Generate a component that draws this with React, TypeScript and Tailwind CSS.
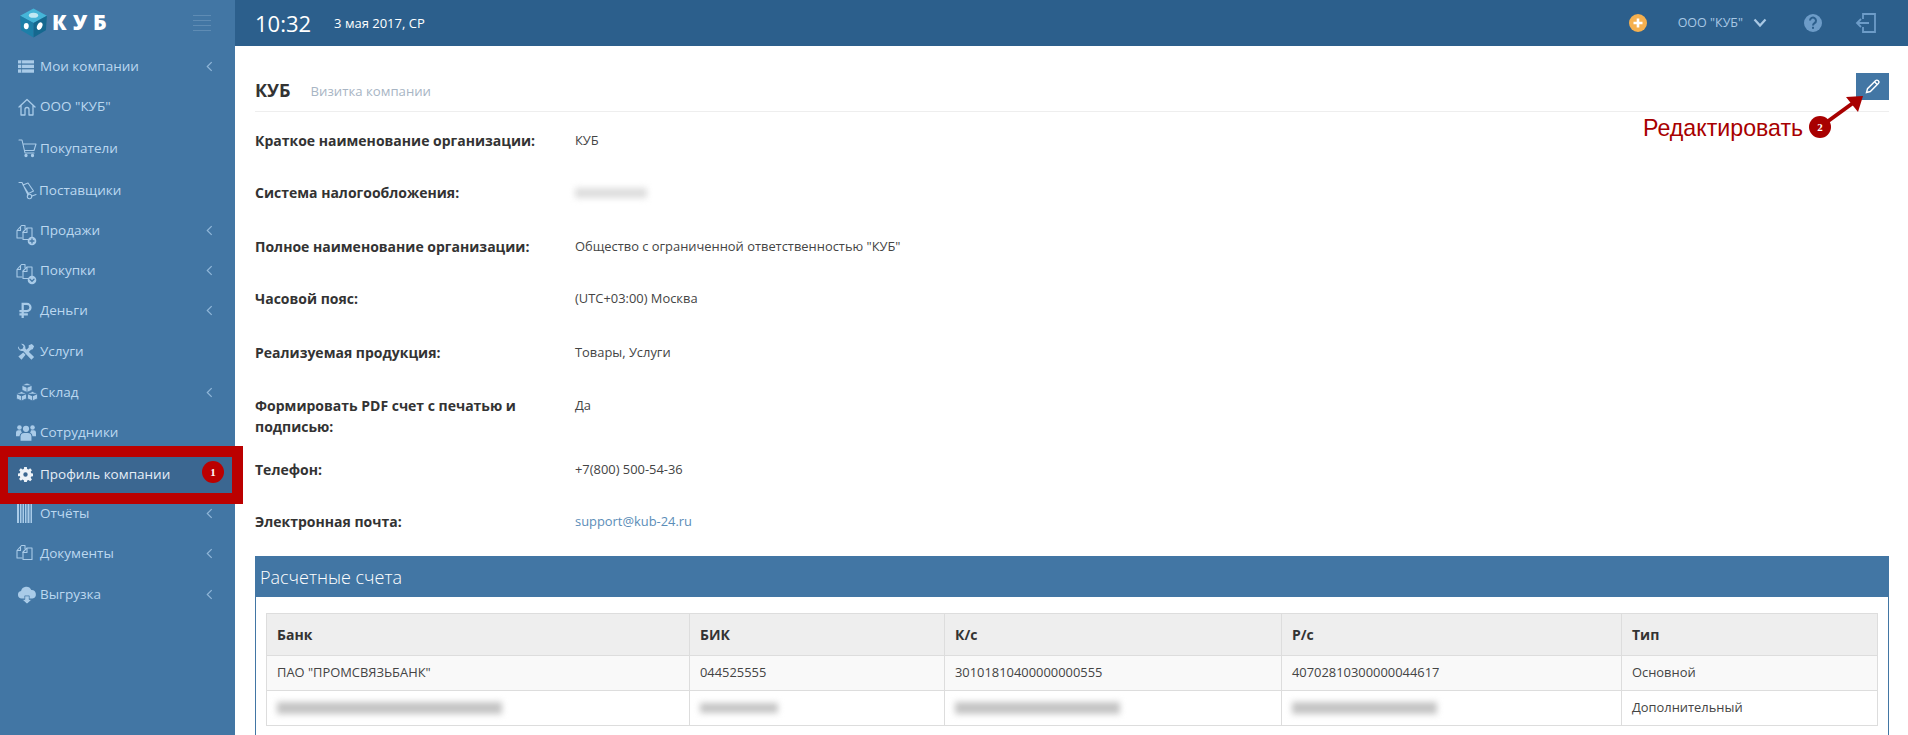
import React from "react";

const S = ({ children, w = 20, h = 20, vb = "0 0 20 20", className = "" }: { children: React.ReactNode; w?: number; h?: number; vb?: string; className?: string }) => (
  <svg width={w} height={h} viewBox={vb} fill="none" stroke="currentColor" strokeWidth={1.1} strokeLinecap="round" strokeLinejoin="round" className={className}>
    {children}
  </svg>
);

const Docs = ({ badge }: { badge?: "plus" | "down" }) => (
  <S w={22} h={24} vb="0 0 22 24" className={badge ? "translate-y-[3px]" : ""}>
    <path d="M2 8.500 6.500 3.500H10v3M2 8.500v7.500h5M2 8.500h3.500V4.500" />
    <path d="M8 10 12 6h5v11.500H8z" />
    <path d="M8 10.500h4V6.500" />
    {badge && <circle cx="17" cy="19" r="4.300" fill="currentColor" stroke="none" />}
    {badge === "plus" && <path d="M15 19h4M17 17v4" stroke="#4276a4" strokeWidth={1.3} />}
    {badge === "down" && <path d="M15 18.300l2 2 2-2" stroke="#4276a4" strokeWidth={1.3} />}
  </S>
);

const Gear = () => (
  <svg width="15" height="15" viewBox="0 0 17 17" fill="currentColor">
    <path fillRule="evenodd" d="M7 0h3l.4 2.300 1.500.6L13.800 1.500 15.800 3.600 14.400 5.500l.6 1.500 2 .4v3l-2 .4-.6 1.400 1.400 1.900-2 2.100-1.900-1.400-1.500.6L10 17H7l-.4-2.100-1.500-.6-1.900 1.400-2-2.100 1.400-1.900-.6-1.400L0 10.400v-3l2-.4.6-1.500L1.200 3.600l2-2.100 1.900 1.400 1.500-.6zM8.500 6a2.500 2.500 0 1 0 0 5 2.500 2.500 0 0 0 0-5z" />
  </svg>
);

const icons: Record<string, React.ReactNode> = {
  list: (
    <svg width="16" height="13" viewBox="0 0 18 14" fill="currentColor">
      <rect x="0" y="0" width="18" height="3.600" />
      <rect x="0" y="5" width="18" height="3.800" />
      <rect x="0" y="10.200" width="18" height="3.800" />
      <path d="M4 0v14" stroke="#4276a4" strokeWidth="0.8" />
    </svg>
  ),
  home: (
    <S>
      <path d="M2 10 10 2.500 18 10M4 8.500V18h4v-5.500a2 2 0 0 1 4 0V18h4V8.500" strokeWidth={1.3} />
    </S>
  ),
  cart: (
    <S>
      <path d="M1 2h3l3 13h9M5 6h13l-2 6.500H7" />
      <circle cx="8" cy="17.500" r="1.100" fill="currentColor" />
      <circle cx="14.500" cy="17.500" r="1.100" fill="currentColor" />
    </S>
  ),
  dolly: (
    <S>
      <path d="M1 2.500h3L10 15M5 5l5-2 5.500 8-5 2.500z" />
      <circle cx="11.500" cy="16.500" r="2.200" />
      <path d="M14 16l4-1.500" />
    </S>
  ),
  sales: <Docs badge="plus" />,
  buys: <Docs badge="down" />,
  docs: <Docs />,
  rub: (
    <svg width="15" height="17" viewBox="0 0 16 18" fill="none" stroke="currentColor" strokeWidth="2.400">
      <path d="M5 17V2h4.500a3.700 3.700 0 0 1 0 7.600H1.500M1.500 13h9" />
    </svg>
  ),
  tools: (
    <svg width="18" height="18" viewBox="0 0 20 20" fill="currentColor">
      <path d="M1 4.500a4.500 4.500 0 0 0 5.800 4.300l9.200 9.700 3-3L9.300 6.200A4.500 4.500 0 0 0 4.500.8l2.800 2.700-1 2.900-3 .9L1.500 3.800z" />
      <path d="M13 2.500l3.500-1.500 2.500 2.500-1.500 3.500-2 .5-3 3-2.500-2.500 3-3zM7 10.500l2.500 2.500-4.500 5.500L1.500 15z" />
    </svg>
  ),
  boxes: (
    <svg width="24" height="20" viewBox="0 0 24 20" fill="currentColor" stroke="#4276a4" strokeWidth="0.8">
      <path d="M12 1l5 2.200v5L12 10.400 7 8.200V3.200zM7 3.200l5 2.200 5-2.200M12 5.400v5" />
      <path d="M6.500 9.500l5 2.200v5l-5 2.200-5-2.200v-5zM1.500 11.700l5 2.200 5-2.200M6.500 13.900v5" />
      <path d="M17.500 9.500l5 2.200v5l-5 2.200-5-2.200v-5zM12.500 11.700l5 2.200 5-2.200M17.500 13.900v5" />
    </svg>
  ),
  users: (
    <svg width="20" height="17" viewBox="0 0 22 18" fill="currentColor">
      <circle cx="11" cy="5" r="3.400" />
      <circle cx="3.800" cy="3.500" r="2.500" />
      <circle cx="18.200" cy="3.500" r="2.500" />
      <path d="M5 18v-5a4 4 0 0 1 4-3.500h4a4 4 0 0 1 4 3.500v5z" />
      <path d="M0 12V9a2.500 2.500 0 0 1 2.500-2.500h3A5 5 0 0 0 6.500 9 5 5 0 0 0 3.800 13H0zM22 12V9a2.500 2.500 0 0 0-2.500-2.500h-3A5 5 0 0 1 15.500 9a5 5 0 0 1 2.700 4H22z" />
    </svg>
  ),
  gear: <Gear />,
  reports: (
    <svg width="15" height="20" viewBox="0 0 15 20" fill="currentColor">
      <path d="M0 0h2v20H0zM3 0h1.500v20H3zM5.500 0h1.500v20H5.500zM8 0h1.500v20H8zM10.500 0h2v20h-2zM13.500 0H15v20h-1.500z" />
    </svg>
  ),
  cloud: (
    <svg width="20" height="18" viewBox="0 0 22 20" fill="currentColor">
      <path d="M5 14a4.300 4.300 0 0 1-.6-8.500A6 6 0 0 1 15.800 4.500 4.800 4.800 0 0 1 17 14z" />
      <path d="M8.500 11h5v4h3L11 20l-5.500-5h3z" stroke="#4276a4" strokeWidth="0.8" />
    </svg>
  ),
};

type Item = { t: string; i: string; arrow?: boolean; h: string; tx: string; iw: string };
const items: Item[] = [
  { t: "Мои компании", i: "list", arrow: true, h: "h-[40px]", tx: "", iw: "w-[40px] pl-[18px]" },
  { t: 'ООО "КУБ"', i: "home", h: "h-[41px]", tx: "", iw: "w-[40px] pl-[17px]" },
  { t: "Покупатели", i: "cart", h: "h-[42px]", tx: "", iw: "w-[40px] pl-[18px]" },
  { t: "Поставщики", i: "dolly", h: "h-[42px]", tx: "ml-[-1px]", iw: "w-[40px] pl-[18px]" },
  { t: "Продажи", i: "sales", arrow: true, h: "h-[39px]", tx: "", iw: "w-[40px] pl-[15px]" },
  { t: "Покупки", i: "buys", arrow: true, h: "h-[40px]", tx: "", iw: "w-[40px] pl-[15px]" },
  { t: "Деньги", i: "rub", arrow: true, h: "h-[41px]", tx: "", iw: "w-[40px] pl-[18px]" },
  { t: "Услуги", i: "tools", h: "h-[41px]", tx: "", iw: "w-[40px] pl-[17px]" },
  { t: "Склад", i: "boxes", arrow: true, h: "h-[40px]", tx: "", iw: "w-[40px] pl-[15px]" },
  { t: "Сотрудники", i: "users", h: "h-[41px]", tx: "", iw: "w-[40px] pl-[16px]" },
  { t: "Профиль компании", i: "gear", h: "h-[40px]", tx: "", iw: "w-[40px] pl-[18px]" },
  { t: "Отчёты", i: "reports", arrow: true, h: "h-[40px]", tx: "", iw: "w-[40px] pl-[17px]" },
  { t: "Документы", i: "docs", arrow: true, h: "h-[41px]", tx: "", iw: "w-[40px] pl-[15px]" },
  { t: "Выгрузка", i: "cloud", arrow: true, h: "h-[41px]", tx: "", iw: "w-[40px] pl-[17px]" },
];

const Blur = ({ w, h = "h-[10px]", tone = "bg-[#c4c4c4]" }: { w: string; h?: string; tone?: string }) => (
  <div className={`${w} ${h} ${tone} blur-[3px]`} />
);

const rows: { l: React.ReactNode; v: React.ReactNode; mb: string }[] = [
  { l: "Краткое наименование организации:", v: "КУБ", mb: "mb-[31px]" },
  { l: "Система налогообложения:", v: <div className="mt-[6px]"><Blur w="w-[72px]" tone="bg-[#dddddd]" /></div>, mb: "mb-[33px]" },
  { l: "Полное наименование организации:", v: 'Общество с ограниченной ответственностью "КУБ"', mb: "mb-[31px]" },
  { l: "Часовой пояс:", v: "(UTC+03:00) Москва", mb: "mb-[33px]" },
  { l: "Реализуемая продукция:", v: "Товары, Услуги", mb: "mb-[32px]" },
  { l: "Формировать PDF счет с печатью и подписью:", v: "Да", mb: "mb-[22px]" },
  { l: "Телефон:", v: "+7(800) 500-54-36", mb: "mb-[31px]" },
  { l: "Электронная почта:", v: <span className="text-[#5b8db8]">support@kub-24.ru</span>, mb: "mb-[24px]" },
];

const Cell = ({ children, head }: { children?: React.ReactNode; head?: boolean }) =>
  head ? (
    <th className="border border-[#dddddd] px-[10px] text-left text-[14px] font-bold text-[#333333]">{children}</th>
  ) : (
    <td className="border border-[#dddddd] px-[10px] text-[12.900px] text-[#444444]">{children}</td>
  );

export default function App() {
  return (
    <div className="relative flex h-[735px] w-[1908px] overflow-hidden bg-white font-['Open_Sans',sans-serif]">
      <aside className="h-full w-[235px] shrink-0 bg-[#4276a4]">
        <div className="flex h-[46px] items-center pl-[18px]">
          <svg width="31" height="32" viewBox="0 0 30 30">
            <path d="M15 1 28 8 15 15 2 8z" fill="#45b5d8" />
            <path d="M2 8 15 15v14L3 22z" fill="#1d7fa8" />
            <path d="M28 8 15 15v14l12-7z" fill="#15688f" />
            <ellipse cx="15" cy="7.500" rx="4.500" ry="2.500" fill="#bfe8f3" />
            <ellipse cx="8" cy="18" rx="2.400" ry="3" fill="#ffffff" />
            <ellipse cx="21" cy="18" rx="2.400" ry="3.800" fill="#ffffff" transform="rotate(25 21 18)" />
          </svg>
          <span className="ml-[3px] text-[21px] font-extrabold tracking-[6px] text-white">КУБ</span>
          <div className="ml-auto mr-[24px] flex w-[18px] flex-col gap-[4px]">
            <div className="h-px bg-[#5f8cb4]" />
            <div className="h-px bg-[#5f8cb4]" />
            <div className="h-px bg-[#5f8cb4]" />
            <div className="h-px bg-[#5f8cb4]" />
          </div>
        </div>
        <nav>
          {items.map((it) => (
            <div key={it.t} className={`flex ${it.h} items-center text-[13.500px] text-[#bcd8f0]`}>
              <span className={`flex shrink-0 items-center text-[#a9cbe8] ${it.iw}`}>{icons[it.i]}</span>
              <span className={it.tx}>{it.t}</span>
              {it.arrow && (
                <svg width="7" height="11" viewBox="0 0 8 12" fill="none" stroke="#8fb6d8" strokeWidth="1.400" className="ml-auto mr-[22px]">
                  <path d="M6.500 1 1.500 6l5 5" />
                </svg>
              )}
            </div>
          ))}
        </nav>
      </aside>

      <div className="flex min-w-0 flex-1 flex-col">
        <header className="flex h-[46px] shrink-0 items-center bg-[#2c5f8c] pl-[20px] text-white">
          <span className="text-[22px]">10:32</span>
          <span className="ml-[23px] pt-[1px] text-[13px]">3 мая 2017, СР</span>
          <div className="ml-auto flex items-center">
            <svg width="20" height="20" viewBox="0 0 20 20">
              <circle cx="10" cy="10" r="9" fill="#f5b04f" />
              <path d="M10 5.500v9M5.500 10h9" stroke="#fff" strokeWidth="2.600" />
            </svg>
            <span className="ml-[30px] text-[12.500px] text-[#a9c8e4]">ООО "КУБ"</span>
            <svg width="14" height="10" viewBox="0 0 14 10" fill="none" stroke="#a9c8e4" strokeWidth="2.200" className="ml-[10px]">
              <path d="M1.500 1.500 7 7.500l5.500-6" />
            </svg>
            <svg width="20" height="20" viewBox="0 0 20 20" className="ml-[36px]">
              <circle cx="10" cy="10" r="9" fill="#6d9cc8" />
              <path d="M7 7.500a3 3 0 1 1 4.500 2.700c-1 .6-1.500 1-1.500 2.300" fill="none" stroke="#2c5f8c" strokeWidth="2" />
              <rect x="9" y="13.800" width="2" height="2" fill="#2c5f8c" />
            </svg>
            <svg width="22" height="22" viewBox="0 0 22 22" fill="none" stroke="#6d9cc8" strokeWidth="1.800" className="ml-[32px] mr-[31px]">
              <path d="M8 7V2h12v18H8v-5" />
              <path d="M14 11H2M6 7l-4 4 4 4" />
            </svg>
          </div>
        </header>

        <main className="min-h-0 flex-1 pl-[20px] pr-[19px]">
          <div className="flex h-[66px] items-end border-b border-[#eeeeee] pb-[7px]">
            <span className="text-[18px] font-bold leading-[28px] text-[#333333]">КУБ</span>
            <span className="ml-[20px] text-[13.200px] leading-[26px] text-[#a8b5c4]">Визитка компании</span>
            <button className="mb-[4px] ml-auto flex h-[27px] w-[33px] items-center justify-center self-end bg-[#4276a4] text-white">
              <svg width="15" height="15" viewBox="0 0 15 15" fill="none" stroke="currentColor" strokeWidth="1.400">
                <path d="M1.500 13.500l1-3.800L10.500 1.700a1.500 1.500 0 0 1 2.800 2.800L5.300 12.500z" />
                <path d="M9.500 2.800l2.700 2.700" />
              </svg>
            </button>
          </div>

          <div className="pt-[18px]">
            {rows.map((r, i) => (
              <div key={i} className={`flex ${r.mb}`}>
                <div className="w-[300px] shrink-0 text-[14px] font-bold leading-[21px] text-[#333333]">{r.l}</div>
                <div className="ml-[20px] text-[12.900px] leading-[21px] text-[#444444]">{r.v}</div>
              </div>
            ))}
          </div>

          <section className="h-[300px] border border-[#4276a4]">
            <div className="flex h-[40px] items-center bg-[#4276a4] pl-[4px] text-[18px] font-light text-white">Расчетные счета</div>
            <div className="px-[10px] pt-[16px]">
              <table className="w-full table-fixed border-collapse">
                <colgroup>
                  <col className="w-[423px]" />
                  <col className="w-[255px]" />
                  <col className="w-[337px]" />
                  <col className="w-[340px]" />
                  <col />
                </colgroup>
                <thead>
                  <tr className="h-[42px] bg-[#eeeeee]">
                    <Cell head>Банк</Cell>
                    <Cell head>БИК</Cell>
                    <Cell head>К/с</Cell>
                    <Cell head>Р/с</Cell>
                    <Cell head>Тип</Cell>
                  </tr>
                </thead>
                <tbody>
                  <tr className="h-[35px] bg-[#f9f9f9]">
                    <Cell>ПАО "ПРОМСВЯЗЬБАНК"</Cell>
                    <Cell>044525555</Cell>
                    <Cell>30101810400000000555</Cell>
                    <Cell>40702810300000044617</Cell>
                    <Cell>Основной</Cell>
                  </tr>
                  <tr className="h-[35px]">
                    <Cell><Blur w="w-[225px]" h="h-[12px]" /></Cell>
                    <Cell><Blur w="w-[78px]" h="h-[10px]" /></Cell>
                    <Cell><Blur w="w-[165px]" h="h-[12px]" /></Cell>
                    <Cell><Blur w="w-[145px]" h="h-[12px]" /></Cell>
                    <Cell>Дополнительный</Cell>
                  </tr>
                </tbody>
              </table>
            </div>
          </section>
        </main>
      </div>

      {/* Annotations over the page */}
      <div className="pointer-events-none absolute left-0 top-[446px] flex h-[58px] w-[243px] items-center border-y-[11px] border-l-[8px] border-r-[11px] border-[#bb0000] bg-[#3b6791]">
        <span className="flex w-[32px] shrink-0 pb-[2px] pl-[10px] text-[#eef3f8]"><Gear /></span>
        <span className="pb-[2px] text-[13.500px] text-[#e6eef6]">Профиль компании</span>
      </div>
      <div className="absolute left-[202px] top-[461px] flex h-[22px] w-[22px] items-center justify-center rounded-full bg-[#bb0000] font-['Liberation_Serif',serif] text-[11px] font-bold text-white">1</div>

      <div className="absolute left-[1643px] top-[113px] font-['Liberation_Sans',sans-serif] text-[23.200px] leading-[30px] text-[#a80000]">Редактировать</div>
      <svg width="70" height="50" viewBox="0 0 70 50" className="absolute left-[1810px] top-[88px]">
        <path d="M10 39 43 15" stroke="#a80000" strokeWidth="4" />
        <path d="M36 9 53 8 48 24z" fill="#a80000" />
      </svg>
      <div className="absolute left-[1809px] top-[116px] flex h-[22px] w-[22px] items-center justify-center rounded-full bg-[#a80000] font-['Liberation_Serif',serif] text-[11px] font-bold text-white">2</div>
    </div>
  );
}
